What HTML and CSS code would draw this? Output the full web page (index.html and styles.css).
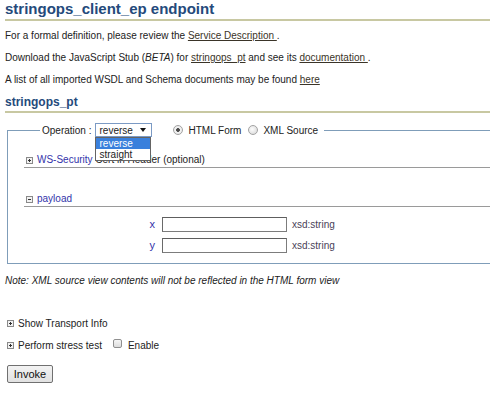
FILE: index.html
```html
<!DOCTYPE html>
<html lang="en">
<head>
<meta charset="utf-8">
<title>stringops_client_ep endpoint</title>
<link rel="stylesheet" href="styles.css">
</head>
<body>
<h1 class="title">stringops_client_ep endpoint</h1>
<div class="intro">
  <p>For a formal definition, please review the <a href="#">Service Description </a>.</p>
  <p>Download the JavaScript Stub (<i>BETA</i>) for <a href="#">stringops_pt</a> and see its <a href="#">documentation </a>.</p>
  <p>A list of all imported WSDL and Schema documents may be found <a href="#">here</a></p>
</div>
<h2 class="subtitle">stringops_pt</h2>
<fieldset class="op-box">
  <legend class="op-legend">
    <div class="legend-row">
      <span>Operation :</span>
      <span class="select-wrap">
        <span class="select"><span>reverse</span><svg class="arrow" width="6" height="4" viewBox="0 0 6 4"><path d="M0 0h6L3 4z" fill="#111"/></svg></span>
        <span class="options">
          <span class="option selected">reverse</span>
          <span class="option">straight</span>
        </span>
      </span>
      <input class="radio r1" type="radio" name="view" checked>
      <span class="rlabel">HTML Form</span>
      <input class="radio r2" type="radio" name="view">
      <span class="rlabel">XML Source</span>
    </div>
  </legend>
  <div class="fs-body">
    <div class="section ws">
      <div class="sec-head">
        <svg class="tog" width="7" height="7" viewBox="0 0 7 7"><rect x=".5" y=".5" width="6" height="6" fill="#f2f2f2" stroke="#8a8a8a"/><path d="M2 3.5h3M3.5 2v3" stroke="#333"/></svg>
        <span class="blue">WS-Security</span>&nbsp;Cert in Header (optional)
      </div>
    </div>
    <div class="section payload">
      <div class="sec-head">
        <svg class="tog" width="7" height="7" viewBox="0 0 7 7"><rect x=".5" y=".5" width="6" height="6" fill="#f2f2f2" stroke="#8a8a8a"/><path d="M2 3.5h3" stroke="#333"/></svg>
        <span class="blue">payload</span>
      </div>
      <div class="fields">
        <span class="flabel">x</span><input class="field" type="text"><span class="ftype">xsd:string</span>
        <span class="flabel">y</span><input class="field" type="text"><span class="ftype">xsd:string</span>
      </div>
    </div>
  </div>
</fieldset>
<p class="note">Note: XML source view contents will not be reflected in the HTML form view</p>
<div class="opt-row first">
  <svg class="tog" width="7" height="7" viewBox="0 0 7 7"><rect x=".5" y=".5" width="6" height="6" fill="#f2f2f2" stroke="#8a8a8a"/><path d="M2 3.5h3M3.5 2v3" stroke="#333"/></svg>
  <span>Show Transport Info</span>
</div>
<div class="opt-row">
  <svg class="tog" width="7" height="7" viewBox="0 0 7 7"><rect x=".5" y=".5" width="6" height="6" fill="#f2f2f2" stroke="#8a8a8a"/><path d="M2 3.5h3M3.5 2v3" stroke="#333"/></svg>
  <span>Perform stress test</span>
  <input class="check" type="checkbox">
  <span class="enable">Enable</span>
</div>
<button class="invoke" type="button">Invoke</button>
</body>
</html>
```
FILE: styles.css
```css
html {
  background: #fff;
}
body {
  margin: 0;
  padding: 0 0 0 5px;
  font-family: "Liberation Sans", Arial, sans-serif;
  font-size: 10px;
  color: #222;
}
.title {
  margin: 0;
  font-size: 15px;
  line-height: 18px;
  font-weight: bold;
  color: #244a7b;
  padding-bottom: 1px;
  border-bottom: 2px solid #c8c8a2;
}
.intro {
  margin-top: 4px;
}
.intro p {
  margin: 0;
  line-height: 22px;
}
a {
  color: #3a3428;
  text-decoration: underline;
}
.subtitle {
  margin: 4px 0 0;
  font-size: 12px;
  line-height: 14px;
  font-weight: bold;
  color: #244a7b;
  padding-bottom: 2px;
  border-bottom: 2px solid #c8c8a2;
}
.op-box {
  margin: 10px 0 0 2px;
  padding: 0;
  border: 1px solid #7f9db9;
  border-right: none;
  min-width: 0;
}
.op-legend {
  margin-left: 32px;
  padding: 0 6px 0 2px;
}
.legend-row {
  display: flex;
  align-items: center;
  height: 14px;
  white-space: nowrap;
}
.select-wrap {
  position: relative;
  margin-left: 4px;
}
.select {
  display: flex;
  align-items: center;
  justify-content: space-between;
  box-sizing: border-box;
  width: 57px;
  height: 14px;
  border: 1px solid #7b9ac4;
  padding: 0 5px 0 3px;
  background: #fff;
}
.arrow {
  display: block;
}
.options {
  position: absolute;
  top: 100%;
  left: 0;
  z-index: 2;
  box-sizing: border-box;
  width: 56px;
  border: 1px solid #646464;
  background: #fff;
}
.option {
  display: block;
  line-height: 11px;
  height: 11px;
  padding-left: 3px;
}
.option.selected {
  background: #3a80dc;
  color: #fff;
}
.radio {
  -webkit-appearance: none;
  appearance: none;
  width: 10px;
  height: 10px;
  margin: 0;
  border: 1px solid #a3a3a3;
  border-radius: 50%;
  background: radial-gradient(circle at 40% 40%, #fdfdfd, #d4d4d4);
  box-sizing: border-box;
}
.radio.r1 {
  margin-left: 21px;
  background: radial-gradient(circle, #444 0, #555 1.6px, #f4f4f4 2.2px, #e2e2e2 100%);
}
.radio.r2 {
  margin-left: 7px;
}
.rlabel {
  margin-left: 5px;
}
.fs-body {
  padding: 16px 0 10px 16px;
}
.sec-head {
  display: flex;
  align-items: center;
  line-height: 14px;
  height: 14px;
  padding-left: 2px;
  border-bottom: 1px solid #9a9a9a;
  white-space: nowrap;
}
.tog {
  display: block;
  flex: none;
  margin-right: 4px;
}
.blue {
  color: #3333aa;
}
.section.ws {
  margin-bottom: 24px;
}
.fields {
  display: grid;
  grid-template-columns: 138px 125px auto;
  row-gap: 6px;
  align-items: center;
  margin-top: 10px;
}
.flabel {
  text-align: right;
  padding-right: 7px;
  color: #3333aa;
  font-size: 11px;
  line-height: 15px;
}
.field {
  box-sizing: border-box;
  width: 125px;
  height: 15px;
  margin: 0;
  padding: 0 2px;
  border: 1px solid #7c7c7c;
  border-top-color: #5e5e5e;
  border-left-color: #6a6a6a;
  font: 10px "Liberation Sans", Arial, sans-serif;
}
.ftype {
  margin-left: 5px;
  color: #4a3f58;
}
.note {
  margin: 6px 0 0;
  line-height: 22px;
  font-style: italic;
}
.opt-row {
  display: flex;
  align-items: center;
  height: 22px;
  padding-left: 2px;
}
.opt-row.first {
  margin-top: 20px;
}
.check {
  -webkit-appearance: none;
  appearance: none;
  box-sizing: border-box;
  width: 9px;
  height: 9px;
  margin: -3px 0 0 11px;
  border: 1px solid #8f8f8f;
  border-radius: 2px;
  background: linear-gradient(#f6f6f6, #dcdcdc);
}
.enable {
  margin-left: 6px;
}
.invoke {
  display: block;
  margin: 9px 0 0 2px;
  box-sizing: border-box;
  width: 46px;
  height: 18px;
  padding: 0;
  border: 1px solid #707070;
  border-radius: 2px;
  background: linear-gradient(#f3f3f3, #e1e1e1);
  font: 11px "Liberation Sans", Arial, sans-serif;
  color: #111;
}
```
